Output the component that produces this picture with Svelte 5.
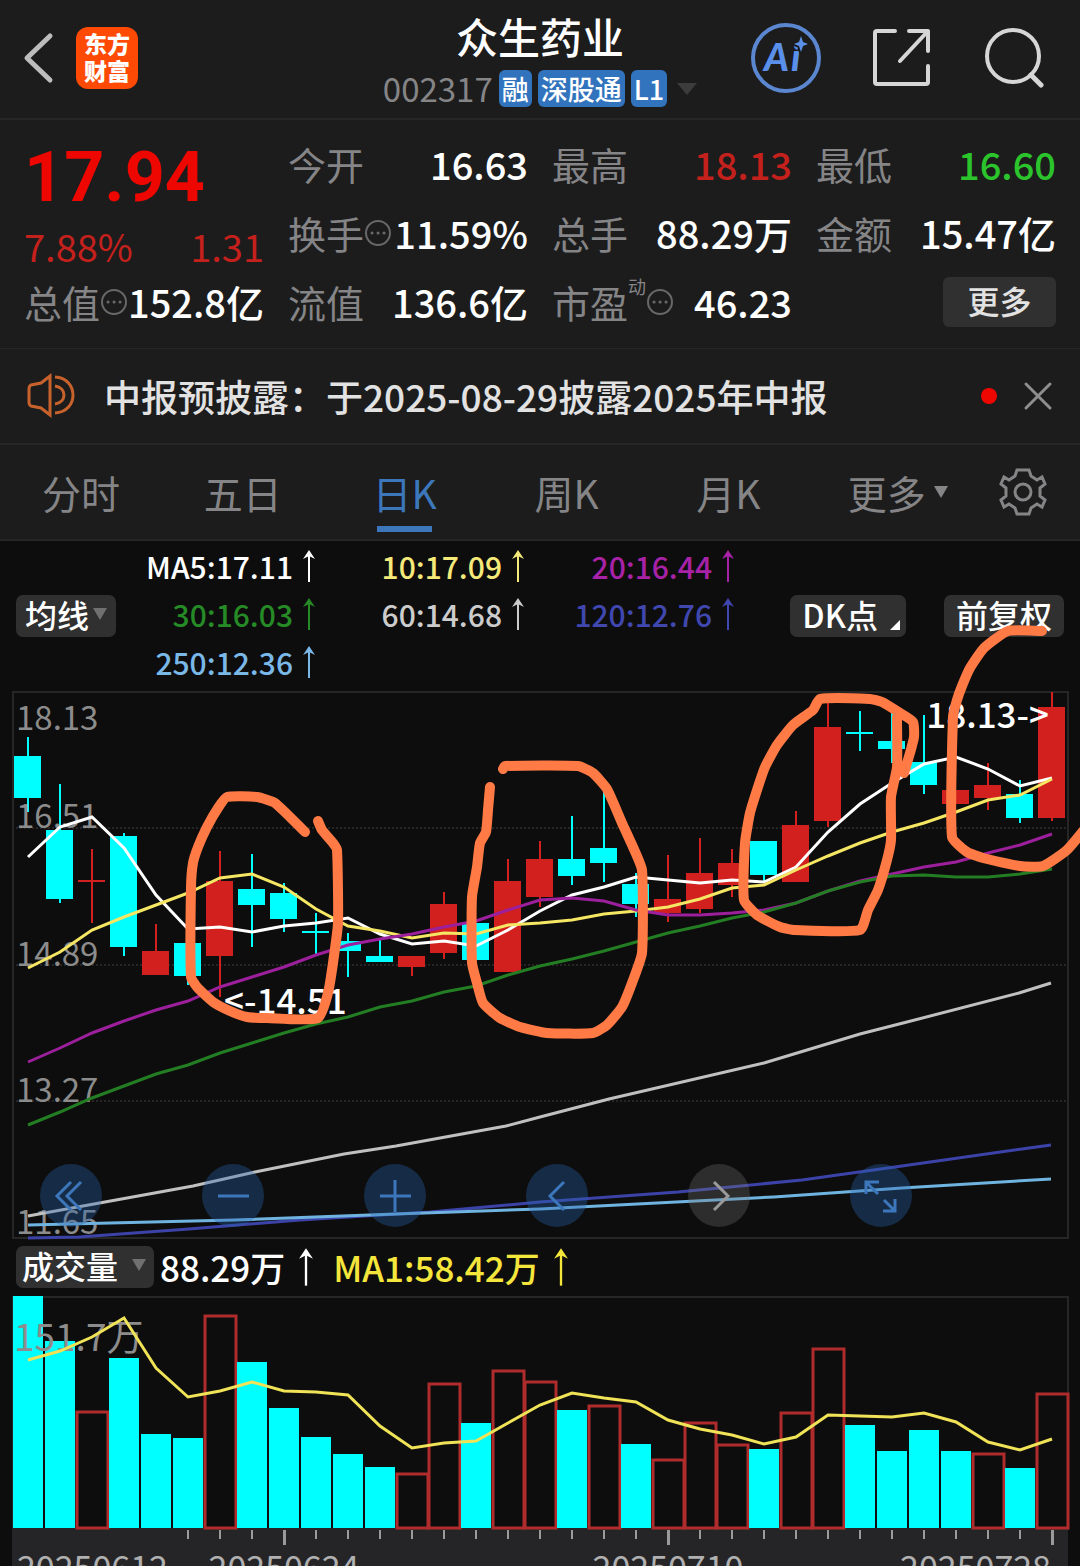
<script>
	const step = 32;
	const firstX = 28;

	// [direction, high, body top, body bottom, low]
	const candles = [
		['down', 46, 65, 107, 121],
		['down', 93, 139, 208, 212],
		['up', 158, 189, 191, 232],
		['down', 142, 145, 256, 265],
		['up', 233, 260, 284, 284],
		['down', 252, 252, 285, 294],
		['up', 160, 190, 265, 306],
		['down', 163, 198, 214, 256],
		['down', 192, 202, 228, 241],
		['down', 222, 240, 242, 264],
		['down', 242, 250, 260, 286],
		['down', 248, 265, 271, 271],
		['up', 265, 265, 276, 285],
		['up', 201, 213, 262, 268],
		['down', 232, 232, 269, 269],
		['up', 168, 190, 281, 281],
		['up', 150, 168, 206, 216],
		['down', 125, 168, 185, 194],
		['down', 96, 157, 172, 191],
		['down', 182, 193, 213, 226],
		['up', 164, 208, 222, 231],
		['up', 147, 182, 218, 222],
		['up', 158, 172, 194, 206],
		['down', 150, 150, 184, 190],
		['up', 120, 134, 191, 191],
		['up', 12, 36, 130, 136],
		['down', 20, 41, 43, 60],
		['down', 22, 50, 58, 72],
		['down', 24, 71, 94, 103],
		['up', 99, 99, 113, 113],
		['up', 72, 94, 107, 119],
		['down', 89, 103, 127, 132],
		['up', 1, 16, 127, 130]
	];

	const ma5 = [166, 136, 126, 157, 204, 238, 236, 241, 235, 232, 227, 243, 253, 250, 255, 239, 220, 204, 196, 186, 189, 192, 189, 191, 176, 141, 113, 92, 73, 66, 78, 95, 87];
	const ma10 = [277, 261, 239, 226, 214, 202, 187, 183, 196, 218, 235, 240, 247, 242, 243, 234, 232, 229, 223, 220, 216, 208, 197, 194, 179, 165, 152, 141, 132, 121, 109, 104, 88];
	const ma20 = [371, 357, 342, 330, 319, 310, 296, 286, 276, 264, 254, 248, 243, 236, 230, 219, 209, 207, 210, 219, 224, 224, 222, 219, 212, 200, 190, 183, 176, 171, 162, 154, 143];
	const ma30 = [434, 421, 407, 395, 383, 374, 362, 352, 342, 333, 326, 316, 310, 301, 295, 284, 275, 268, 260, 251, 242, 235, 227, 221, 212, 200, 191, 185, 184, 186, 186, 183, 178];

	const ma60 = '28,525 193,495 255,481 344,463 396,455 506,435 540,426 609,408 764,372 860,343 907,331 1019,302 1051,292';
	const ma120 = '28,547 79,546 189,538 300,529 430,521 540,511 678,501 802,489 902,475 1022,458 1051,454';
	const ma250 = '28,534 234,529 396,523 540,518 774,506 902,497 1051,488';

	const volumes = [
		['down', 0], ['down', 45], ['up', 115], ['down', 62], ['down', 138], ['down', 142], ['up', 19],
		['down', 66], ['down', 112], ['down', 141], ['down', 158], ['down', 171], ['up', 177], ['up', 87],
		['down', 127], ['up', 74], ['up', 85], ['down', 114], ['up', 109], ['down', 148], ['up', 163],
		['up', 126], ['up', 148], ['down', 153], ['up', 116], ['up', 52], ['down', 129], ['down', 155],
		['down', 134], ['down', 155], ['up', 157], ['down', 172], ['up', 97]
	];
	const volumeMa = [64, 55, 41, 22, 72, 101, 95, 86, 95, 96, 99, 130, 152, 147, 145, 127, 109, 97, 102, 106, 124, 133, 139, 148, 141, 119, 120, 121, 117, 126, 146, 154, 143];

	const priceLabels = [
		['18.13', 39],
		['16.51', 137],
		['14.89', 275],
		['13.27', 411],
		['11.65', 543]
	];

	const dates = [
		['20250612', 17, 'start'],
		['20250624', 284, 'middle'],
		['20250710', 668, 'middle'],
		['20250728', 1051, 'end']
	];
	const majorTicks = [8, 20, 32];
	const ticks = Array.from({ length: 28 }, (_, i) => i + 5);

	// hand-drawn marks over the chart
	const strokes = [
		[[305, 141], [275, 112], [257, 106], [227, 106], [218, 117], [207, 136], [198, 156], [193, 172], [191, 196], [191, 286], [197, 296], [213, 311], [230, 320], [247, 326], [267, 327], [318, 327], [328, 302], [333, 272], [338, 232], [337, 159], [333, 152], [322, 139], [318, 130]],
		[[503, 78], [505, 75], [578, 75], [593, 82], [607, 98], [622, 132], [633, 156], [642, 179], [642, 262], [632, 292], [622, 316], [607, 334], [593, 342], [547, 342], [520, 336], [500, 327], [483, 312], [477, 292], [472, 272], [472, 206], [477, 176], [480, 152], [486, 141], [488, 119], [490, 96]],
		[[904, 82], [910, 62], [914, 46], [913, 31], [900, 22], [882, 11], [870, 8], [820, 8], [813, 19], [793, 34], [777, 54], [765, 76], [758, 96], [750, 122], [745, 152], [744, 209], [757, 224], [780, 236], [795, 239], [860, 239], [868, 219], [878, 199], [887, 169], [891, 149], [891, 106], [897, 76], [897, 26]],
		[[1042, -60], [1008, -60], [984, -43], [970, -23], [962, -5], [957, 9], [953, 26], [952, 146], [967, 161], [983, 167], [1020, 175], [1043, 175], [1067, 159], [1084, 139]]
	];

	const legend = [
		['MA5:17.11', '#ffffff'],
		['10:17.09', '#f5e97a'],
		['20:16.44', '#a822a8'],
		['30:16.03', '#268a26'],
		['60:14.68', '#cccccc'],
		['120:12.76', '#4048b0'],
		['250:12.36', '#7ab8e8']
	];

	const tabs = ['分时', '五日', '日K', '周K', '月K'];
	let activeTab = $state('日K');
	let noticeOpen = $state(true);

	const tools = [
		['最早', 'M31 18 17 32 31 46M41 18 27 32 41 46'],
		['缩小', 'M16 32H47'],
		['放大', 'M16 32H47M31 16V48'],
		['向左', 'M38 18 24 32 38 46'],
		['向右', 'M26 18 40 32 26 46'],
		['全屏', 'M16 30V18H29M17 19 28 30M34 36 45 47M45 35V47H33']
	];

	const x = (i) => firstX + i * step;
	const line = (values) => values.map((v, i) => `${x(i)},${v}`).join(' ');

	// soft curve through every point
	function curve(points) {
		let d = `M${points[0]}`;
		for (let i = 0; i < points.length - 1; i++) {
			const a = points[i - 1] ?? points[i];
			const b = points[i];
			const c = points[i + 1];
			const e = points[i + 2] ?? c;
			const reach = Math.hypot(c[0] - b[0], c[1] - b[1]) / 6;
			const before = Math.hypot(c[0] - a[0], c[1] - a[1]);
			const after = Math.hypot(e[0] - b[0], e[1] - b[1]);
			d += `C${b[0] + ((c[0] - a[0]) / before) * reach},${b[1] + ((c[1] - a[1]) / before) * reach}`;
			d += ` ${c[0] - ((e[0] - b[0]) / after) * reach},${c[1] - ((e[1] - b[1]) / after) * reach} ${c}`;
		}
		return d;
	}
</script>

{#snippet info()}
	<svg class="info" viewBox="0 0 28 28" aria-hidden="true">
		<circle cx="14" cy="14" r="12" />
		<path d="M8 14h.1M14 14h.1M20 14h.1" />
	</svg>
{/snippet}

{#snippet arrow()}
	<svg class="arrow" viewBox="0 0 12 32" aria-hidden="true">
		<path d="M6 2V32" />
		<path class="head" d="M6 0 12 9 6 6 0 9Z" />
	</svg>
{/snippet}

<div class="screen">
	<header>
		<div class="left">
			<button class="icon" aria-label="返回">
				<svg width="32" height="52" viewBox="0 0 32 52"><path d="M28 4 5 26 28 48" stroke="#bdbdbd" stroke-width="5" /></svg>
			</button>
			<a class="logo" href="#home">东方<br />财富</a>
		</div>
		<div class="title">
			<h1>众生药业</h1>
			<div class="code">
				<span>002317</span>
				<b>融</b>
				<b>深股通</b>
				<b>L1</b>
				<i class="caret wide"></i>
			</div>
		</div>
		<div class="actions">
			<button class="icon" aria-label="智能助手">
				<svg width="72" height="72" viewBox="0 0 72 72">
					<circle cx="36" cy="36" r="33" stroke="#5a87d0" stroke-width="4" />
					<text class="ai" x="14" y="49">A<tspan dx="2">i</tspan></text>
					<path class="spark" d="M51 14 53 20 58 22 53 24 51 30 49 24 44 22 49 20Z" />
				</svg>
			</button>
			<button class="icon" aria-label="分享">
				<svg width="60" height="60" viewBox="0 0 60 60">
					<path d="M22 3H4Q2 3 2 5V54Q2 56 4 56H53Q55 56 55 54V38M36 3H55V23M55 3 27 33" stroke="#d6d6d6" stroke-width="4" />
				</svg>
			</button>
			<button class="icon" aria-label="搜索">
				<svg width="60" height="60" viewBox="0 0 60 60">
					<circle cx="29" cy="28" r="26" stroke="#d6d6d6" stroke-width="4" />
					<path d="M47 47 57 57" stroke="#d6d6d6" stroke-width="5" />
				</svg>
			</button>
		</div>
	</header>

	<section class="quote">
		<div class="now">
			<strong>17.94</strong>
			<div class="change"><span>7.88%</span><span>1.31</span></div>
		</div>
		<div class="cell"><span>今开</span><b>16.63</b></div>
		<div class="cell"><span>最高</span><b class="red">18.13</b></div>
		<div class="cell"><span>最低</span><b class="green">16.60</b></div>
		<div class="cell"><span>换手{@render info()}</span><b>11.59%</b></div>
		<div class="cell"><span>总手</span><b>88.29万</b></div>
		<div class="cell"><span>金额</span><b>15.47亿</b></div>
		<div class="cell"><span>总值{@render info()}</span><b>152.8亿</b></div>
		<div class="cell"><span>流值</span><b>136.6亿</b></div>
		<div class="cell"><span>市盈<small>动</small>{@render info()}</span><b>46.23</b></div>
		<div class="cell end"><button class="more">更多</button></div>
	</section>

	{#if noticeOpen}
		<section class="notice">
			<svg width="52" height="46" viewBox="0 0 52 46" aria-hidden="true">
				<path d="M24 3 15 10 5 12Q3 13 3 16V29Q3 32 5 33L15 35 24 42ZM29 4C53 5 53 39 29 40M29 13C41 15 41 29 29 31" stroke="#c8622c" stroke-width="3" />
			</svg>
			<a href="#notice">中报预披露：于2025-08-29披露2025年中报</a>
			<span class="dot"></span>
			<button class="icon" aria-label="关闭" onclick={() => (noticeOpen = false)}>
				<svg width="30" height="30" viewBox="0 0 30 30"><path d="M3 3 27 27M27 3 3 27" stroke="#8e8e8e" stroke-width="3" /></svg>
			</button>
		</section>
	{/if}

	<nav>
		{#each tabs as tab}
			<button class:active={tab === activeTab} onclick={() => (activeTab = tab)}>{tab}</button>
		{/each}
		<button class="menu">更多<i class="caret"></i></button>
		<button class="gear" aria-label="设置">
			<svg width="50" height="50" viewBox="-25 -25 50 50">
				<path d="M-6-22H6L8-16 14-12 19-15 22-8 17-4V4L22 8 19 15 14 12 8 16 6 22H-6L-8 16-14 12-19 15-22 8-17 4V-4L-22-8-19-15-14-12-8-16Z" />
				<circle r="8" />
			</svg>
		</button>
	</nav>

	<section class="legend">
		<button class="chip">均线<i class="caret"></i></button>
		<div class="averages">
			{#each legend as [label, color]}
				<span style="color: {color}">{label}{@render arrow()}</span>
			{/each}
		</div>
		<div class="options">
			<button class="chip dk">DK点<i class="corner"></i></button>
			<button class="chip">前复权</button>
		</div>
	</section>

	<section class="chart">
		<svg class="plot" viewBox="0 0 1080 547">
			<g class="grid">
				<rect x="13" y="1" width="1055" height="546" />
				<path d="M12 137H1068M12 274H1068M12 410H1068" stroke-dasharray="2 2" />
			</g>
			{#each candles as [dir, high, top, bottom, low], i}
				<g class={dir}>
					<rect x={x(i) - 1} y={high} width="2" height={low - high} />
					<rect x={x(i) - 14} y={top} width="27" height={bottom - top} />
				</g>
			{/each}
			{#each priceLabels as [label, y]}
				<text class="scale" x="16" {y}>{label}</text>
			{/each}
			<g class="lines">
				<polyline points={line(ma5)} stroke="#ffffff" />
				<polyline points={line(ma10)} stroke="#f5e663" />
				<polyline points={line(ma20)} stroke="#9c1f9c" />
				<polyline points={line(ma30)} stroke="#237d23" />
				<polyline points={ma60} stroke="#c0c0c0" />
				<polyline points={ma120} stroke="#3c43a8" />
				<polyline points={ma250} stroke="#6fb4e0" />
			</g>
			<text class="mark" x="224" y="323">&lt;-14.51</text>
			<text class="mark" x="1049" y="37" text-anchor="end">18.13-&gt;</text>
			<g class="pen">
				{#each strokes as points}
					<path d={curve(points)} />
				{/each}
			</g>
		</svg>
		<div class="tools">
			{#each tools as [label, d]}
				<button class:off={label === '向右'} aria-label={label}>
					<svg viewBox="0 0 62 64"><path {d} /></svg>
				</button>
			{/each}
		</div>
	</section>

	<section class="volume-head">
		<button class="chip">成交量<i class="caret"></i></button>
		<span>88.29万{@render arrow()}</span>
		<span class="yellow">MA1:58.42万{@render arrow()}</span>
	</section>

	<section class="volume">
		<svg class="plot" viewBox="0 0 1080 300">
			<g class="grid"><rect x="13" y="1" width="1055" height="232" /></g>
			<rect x="12" y="233" width="1056" height="67" fill="#252527" />
			{#each volumes as [dir, top], i}
				{#if dir === 'up'}
					<rect class="hollow" x={x(i) - 15} y={top + 1} width="31" height={231 - top} />
				{:else}
					<rect class="down" x={x(i) - 15} y={top} width="30" height={232 - top} />
				{/if}
			{/each}
			<text class="scale big" x="14" y="55">151.7万</text>
			<polyline class="average" points={line(volumeMa)} />
			{#each ticks as i}
				<rect class="tick" x={x(i) - 1} y="234" width={majorTicks.includes(i) ? 3 : 2} height={majorTicks.includes(i) ? 15 : 9} />
			{/each}
			{#each dates as [label, dx, anchor]}
				<text class="date" x={dx} y="284" text-anchor={anchor}>{label}</text>
			{/each}
		</svg>
	</section>
</div>

<style>
:global(body) {
  background: #0d0d0d;
}
.screen {
  height: 100vh;
  overflow: hidden;
  background: #0d0d0d;
  color: #fff;
  font-family: "Noto Sans CJK SC", "Noto Sans", sans-serif;
  font-weight: 500;
}
button {
  border: 0;
  padding: 0;
  background: none;
  color: inherit;
  font: inherit;
  cursor: pointer;
}
a {
  color: inherit;
  text-decoration: none;
}
svg {
  display: block;
  fill: none;
}
.icon {
  display: flex;
}
.icon path {
  stroke-linecap: round;
  stroke-linejoin: round;
}
.caret {
  border: 7px solid transparent;
  border-top: 12px solid #707070;
  border-bottom: 0;
}
.caret.wide {
  border-width: 12px 10px 0;
  border-top-color: #3c3c3c;
  margin-left: 4px;
}

header {
  display: grid;
  grid-template-columns: 1fr auto 1fr;
  align-items: center;
  padding: 9px 22px 11px;
  background: #1c1c1c;
  border-bottom: 2px solid #262626;
}
.left {
  display: flex;
  align-items: center;
  gap: 22px;
}
.logo {
  padding: 3px 8px 5px;
  border-radius: 12px;
  background: #fe4a05;
  font-size: 23px;
  font-weight: 900;
  line-height: 27px;
}
.title {
  text-align: center;
}
h1 {
  margin: 0;
  font-size: 42px;
  font-weight: 500;
  line-height: 54px;
}
.code {
  display: flex;
  align-items: center;
  justify-content: center;
  gap: 6px;
  margin-top: 7px;
  color: #858587;
  font-size: 33px;
  font-weight: 400;
  line-height: 37px;
}
.code b {
  padding: 0 3px;
  border-radius: 6px;
  background: #3273bd;
  color: #fff;
  font-size: 27px;
  font-weight: 500;
}
.actions {
  display: flex;
  align-items: center;
  justify-content: flex-end;
  gap: 51px;
  padding-right: 14px;
}
.ai {
  fill: #5b90ea;
  font-family: Lato, sans-serif;
  font-size: 38px;
  font-style: italic;
  font-weight: 900;
}
.spark {
  fill: #5b90ea;
  stroke: #1c1c1c;
  stroke-width: 4px;
  paint-order: stroke;
}

.quote {
  display: grid;
  grid-template-columns: repeat(4, 1fr);
  grid-auto-rows: 69px;
  column-gap: 24px;
  padding: 9px 24px 12px;
  background: #1c1c1c;
  border-bottom: 1px solid #262626;
  font-size: 38px;
}
.now {
  grid-row: span 2;
  color: #c4201c;
}
.now strong {
  display: block;
  color: #ee0600;
  font-family: Roboto, sans-serif;
  font-size: 70px;
  font-weight: 700;
  line-height: 96px;
}
.change {
  display: flex;
  justify-content: space-between;
  line-height: 42px;
  font-weight: 400;
}
.cell {
  display: flex;
  align-items: center;
  justify-content: space-between;
  white-space: nowrap;
}
.cell.end {
  justify-content: flex-end;
}
.cell span {
  display: flex;
  align-items: center;
  color: #858587;
  font-weight: 400;
}
.cell b {
  font-weight: 500;
}
.cell small {
  align-self: flex-start;
  font-size: 18px;
  line-height: 24px;
}
.cell .red {
  color: #c4201c;
}
.cell .green {
  color: #2cc42c;
}
.info {
  width: 28px;
  height: 28px;
  stroke: #68686a;
  stroke-width: 2px;
}
.info path {
  stroke-width: 3px;
  stroke-linecap: round;
}
.more {
  width: 113px;
  padding-bottom: 4px;
  border-radius: 6px;
  background: #303030;
  color: #e2e2e2;
  font-size: 32px;
  line-height: 46px;
}

.notice {
  display: flex;
  align-items: center;
  padding: 20px 27px 20px 26px;
  background: #1c1c1c;
  border-bottom: 2px solid #262626;
  color: #e2e2e2;
  font-size: 37px;
  line-height: 54px;
}
.notice a {
  flex: 1;
  margin-left: 26px;
  white-space: nowrap;
}
.notice .dot {
  width: 16px;
  height: 16px;
  margin-right: 26px;
  border-radius: 50%;
  background: #ee0600;
}

nav {
  display: flex;
  align-items: center;
  padding-right: 20px;
  background: #1c1c1c;
  border-bottom: 2px solid #262626;
  color: #858587;
  font-size: 39px;
  line-height: 80px;
}
nav button {
  flex: 11;
  padding: 7px 0;
  font-weight: 400;
}
nav button.active {
  color: #3d77bb;
  background: linear-gradient(#3d77bb, #3d77bb) 50% 81px / 55px 6px no-repeat;
}
nav .menu {
  display: flex;
  flex: 12;
  align-items: center;
  justify-content: center;
  gap: 8px;
}
nav .menu .caret {
  border-top-color: #858587;
}
nav .gear {
  display: flex;
  flex: none;
  justify-content: center;
  width: 74px;
  padding: 0;
}
.gear svg {
  stroke: #858587;
  stroke-width: 3px;
}

.legend {
  display: flex;
  align-items: center;
  padding: 1px 16px;
}
.chip {
  display: flex;
  align-items: center;
  gap: 4px;
  padding: 0 9px 4px;
  border-radius: 7px;
  background: #303030;
  font-size: 32px;
  line-height: 38px;
  white-space: nowrap;
}
.averages {
  display: grid;
  grid-template-columns: 199px 209px 210px;
  padding-bottom: 4px;
  font-size: 30px;
  line-height: 48px;
}
.averages span {
  display: flex;
  align-items: center;
  justify-content: flex-end;
  gap: 10px;
}
.arrow {
  width: 12px;
  height: 32px;
  stroke: currentColor;
  stroke-width: 2px;
}
.arrow .head {
  fill: currentColor;
  stroke: none;
}
.options {
  display: flex;
  gap: 38px;
  margin-left: auto;
}
.options .chip {
  padding: 0 12px 4px;
}
.options .dk {
  padding-right: 6px;
}
.corner {
  align-self: flex-end;
  margin: 0 0 3px 8px;
  border: 5px solid #fff;
  border-top-color: transparent;
  border-left-color: transparent;
}

.chart {
  position: relative;
}
.plot {
  width: 100%;
  height: auto;
  overflow: visible;
}
.grid {
  stroke: #262626;
  stroke-width: 2px;
}
.up {
  fill: #d2201f;
}
.down {
  fill: #00ffff;
}
.scale {
  fill: #8c8c8c;
  font-size: 33px;
  font-weight: 400;
}
.scale.big {
  font-size: 37px;
}
.lines {
  stroke-width: 3px;
}
.mark {
  fill: #fff;
  font-size: 35px;
}
.pen {
  stroke: #ff7a45;
  stroke-width: 10px;
  stroke-linecap: round;
  stroke-linejoin: round;
}
.tools {
  position: absolute;
  right: 0;
  bottom: 11px;
  left: 40px;
  display: flex;
  gap: 100px;
}
.tools button {
  width: 62px;
  height: 63px;
  border-radius: 50%;
  background: rgba(40, 100, 175, 0.35);
}
.tools svg {
  stroke: #3d77bb;
  stroke-width: 3px;
}
.tools .off {
  background: rgba(120, 120, 120, 0.3);
}
.tools .off svg {
  stroke: #9a9a9a;
}

.volume-head {
  display: flex;
  align-items: center;
  gap: 6px;
  padding: 8px 16px;
  font-size: 35px;
  line-height: 42px;
}
.volume-head .chip {
  gap: 14px;
  padding: 0 8px 4px 6px;
}
.volume-head span {
  display: flex;
  align-items: center;
  gap: 14px;
}
.volume-head .yellow {
  margin-left: 14px;
  color: #f5e63c;
}
.volume-head .arrow {
  width: 14px;
  height: 38px;
}
.hollow {
  stroke: #b02c2c;
  stroke-width: 3px;
}
.average {
  stroke: #f0e357;
  stroke-width: 3px;
}
.tick {
  fill: #9a9a9a;
}
.date {
  fill: #b0b0b0;
  font-size: 34px;
  font-weight: 400;
}
</style>
